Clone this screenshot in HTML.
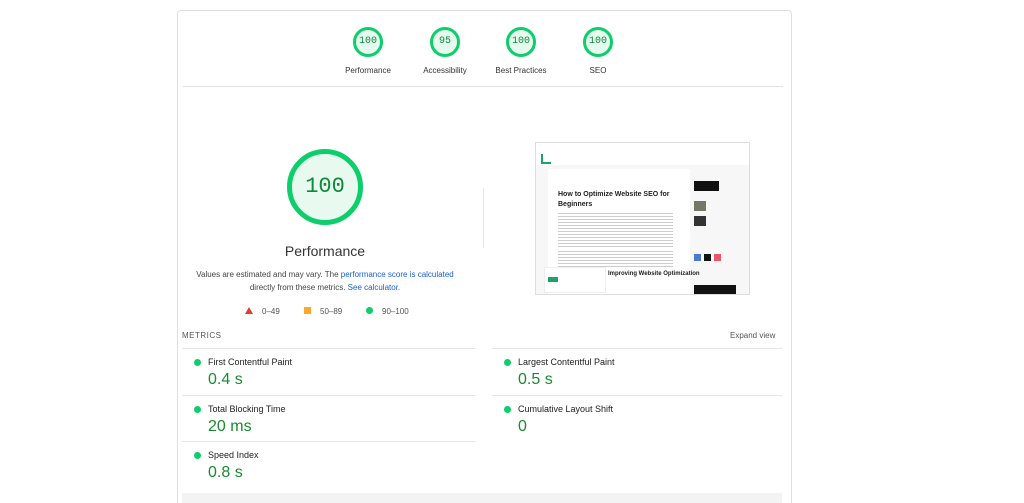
<!DOCTYPE html><html style="height:503px;overflow:hidden"><head><style>
html,body{margin:0;height:503px;overflow:hidden}
body{width:1024px;background:#fff;font-family:"Liberation Sans",sans-serif;position:relative;color:#212121}
.a{position:absolute}
.card{left:177px;top:10px;width:613px;height:500px;border:1px solid #e0e0e0;border-radius:4px}
.g{position:absolute;width:30px;height:30px;border:3px solid #0cce6b;border-radius:50%;background:#e6f9ee;box-sizing:border-box;font-family:"Liberation Mono",monospace;font-size:10px;color:#0a8a3a;text-align:center;line-height:24px}
.gl{position:absolute;font-size:8px;color:#333;width:90px;text-align:center}
.m{position:absolute;border-top:1px solid #e6e6e6;height:46px}
.dot{position:absolute;left:12px;top:10px;width:7px;height:7px;border-radius:50%;background:#0cce6b}
.ml{position:absolute;left:26px;top:8px;font-size:9px;color:#212121}
.mv{position:absolute;left:26px;top:22px;font-size:16px;color:#198a2e}
a{color:#1a5fd6;text-decoration:none}
</style></head><body>
<div class="a card"></div>
<div class="g" style="left:353px;top:27px">100</div>
<div class="g" style="left:430px;top:27px">95</div>
<div class="g" style="left:506px;top:27px">100</div>
<div class="g" style="left:583px;top:27px">100</div>
<div class="gl" style="left:323px;top:66px">Performance</div>
<div class="gl" style="left:400px;top:66px">Accessibility</div>
<div class="gl" style="left:476px;top:66px">Best Practices</div>
<div class="gl" style="left:553px;top:66px">SEO</div>
<div class="a" style="left:183px;top:86px;width:600px;height:1px;background:#e0e0e0"></div>
<div class="a" style="left:287px;top:149px;width:76px;height:76px;border:5px solid #0cce6b;border-radius:50%;background:#e8faef;box-sizing:border-box;text-align:center;line-height:66px;font-family:'Liberation Mono',monospace;font-size:22px;color:#0a8a3a">100</div>
<div class="a" style="left:225px;top:243px;width:200px;text-align:center;font-size:14px;color:#333">Performance</div>
<div class="a" style="left:180px;top:268px;width:290px;text-align:center;font-size:8px;line-height:13px;color:#444">Values are estimated and may vary. The <a>performance score is calculated</a><br>directly from these metrics. <a>See calculator</a>.</div>
<div class="a" style="left:245px;top:307px;width:0;height:0;border-left:4px solid transparent;border-right:4px solid transparent;border-bottom:7px solid #e53935"></div>
<div class="a" style="left:262px;top:307px;font-size:8px;color:#555">0–49</div>
<div class="a" style="left:304px;top:307px;width:7px;height:7px;background:#ffa726"></div>
<div class="a" style="left:320px;top:307px;font-size:8px;color:#555">50–89</div>
<div class="a" style="left:366px;top:307px;width:7px;height:7px;border-radius:50%;background:#0cce6b"></div>
<div class="a" style="left:382px;top:307px;font-size:8px;color:#555">90–100</div>
<div class="a" style="left:483px;top:188px;width:1px;height:60px;background:#e6e6e6"></div>
<div class="a" style="left:535px;top:142px;width:213px;height:151px;border:1px solid #ddd;background:#f7f7f7;overflow:hidden">
 <div class="a" style="left:0;top:0;width:213px;height:22px;background:#fff"></div>
 <div class="a" style="left:5px;top:11px;width:8px;height:8px;border-left:2px solid #1aa36a;border-bottom:2px solid #1aa36a"></div>
 <div class="a" style="left:12px;top:26px;width:142px;height:125px;background:#fff"></div>
 <div class="a" style="left:22px;top:47px;font-size:7px;font-weight:bold;line-height:10px;width:120px">How to Optimize Website SEO for Beginners</div>
 <div class="a" style="left:22px;top:70px;width:115px;height:35px;background:repeating-linear-gradient(#ccc 0 1px,#fff 1px 3px)"></div>
 <div class="a" style="left:22px;top:108px;width:115px;height:18px;background:repeating-linear-gradient(#ccc 0 1px,#fff 1px 3px)"></div>
 <div class="a" style="left:72px;top:128px;font-size:6px;font-weight:bold">Improving Website Optimization</div>
 <div class="a" style="left:8px;top:124px;width:60px;height:24px;background:#fff;border:1px solid #eee"></div>
 <div class="a" style="left:12px;top:134px;width:10px;height:5px;background:#1aa36a"></div>
 <div class="a" style="left:158px;top:38px;width:25px;height:10px;background:#111"></div>
 <div class="a" style="left:158px;top:58px;width:12px;height:10px;background:#776"></div>
 <div class="a" style="left:158px;top:73px;width:12px;height:10px;background:#333"></div>
 <div class="a" style="left:158px;top:111px;width:7px;height:7px;background:#4a7bd0"></div>
 <div class="a" style="left:168px;top:111px;width:7px;height:7px;background:#111"></div>
 <div class="a" style="left:178px;top:111px;width:7px;height:7px;background:#e56"></div>
 <div class="a" style="left:158px;top:142px;width:42px;height:10px;background:#111"></div>
</div>
<div class="a" style="left:182px;top:331px;font-size:8px;letter-spacing:.5px;color:#555">METRICS</div>
<div class="a" style="left:730px;top:331px;font-size:8px;color:#555">Expand view</div>
<div class="m" style="left:182px;top:348px;width:293px"><div class="dot"></div><div class="ml">First Contentful Paint</div><div class="mv">0.4 s</div></div>
<div class="m" style="left:492px;top:348px;width:290px"><div class="dot"></div><div class="ml">Largest Contentful Paint</div><div class="mv">0.5 s</div></div>
<div class="m" style="left:182px;top:395px;width:293px"><div class="dot"></div><div class="ml">Total Blocking Time</div><div class="mv">20 ms</div></div>
<div class="m" style="left:492px;top:395px;width:290px"><div class="dot"></div><div class="ml">Cumulative Layout Shift</div><div class="mv">0</div></div>
<div class="m" style="left:182px;top:441px;width:293px"><div class="dot"></div><div class="ml">Speed Index</div><div class="mv">0.8 s</div></div>
<div class="a" style="left:182px;top:493px;width:600px;height:12px;background:#f3f3f3"></div>
</body></html>
